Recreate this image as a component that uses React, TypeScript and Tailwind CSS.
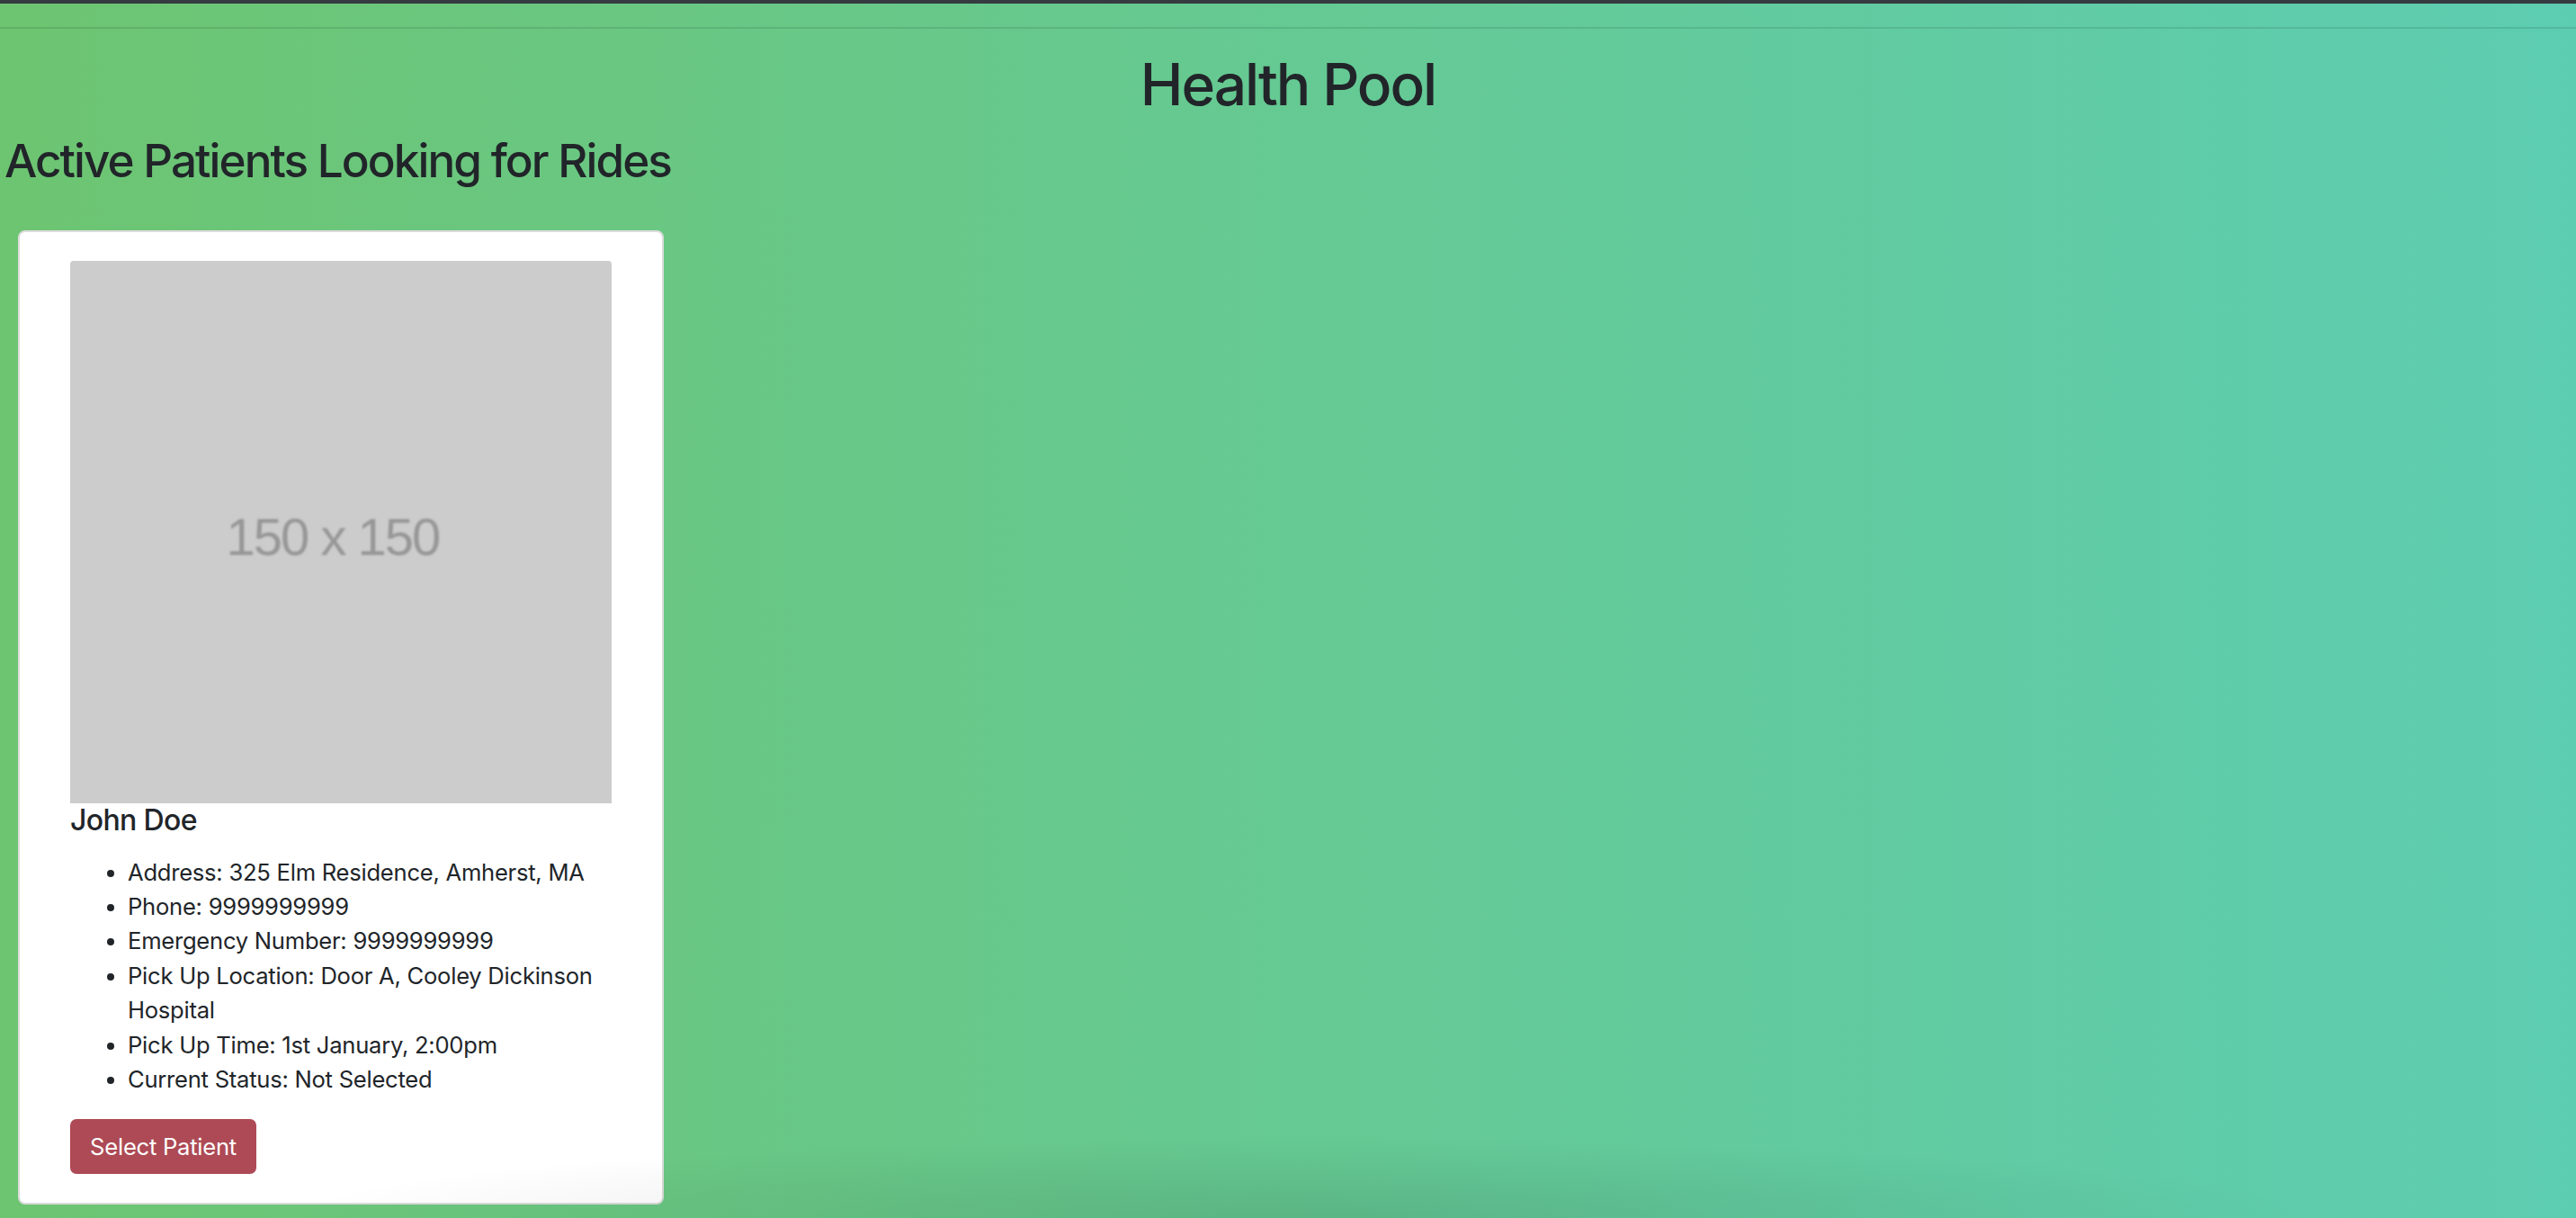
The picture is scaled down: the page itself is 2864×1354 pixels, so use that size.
import React from 'react';

type Patient = {
  name: string;
  details: string[];
};

const patient: Patient = {
  name: 'John Doe',
  details: [
    'Address: 325 Elm Residence, Amherst, MA',
    'Phone: 9999999999',
    'Emergency Number: 9999999999',
    'Pick Up Location: Door A, Cooley Dickinson Hospital',
    'Pick Up Time: 1st January, 2:00pm',
    'Current Status: Not Selected',
  ],
};

function PatientCard({ p }: { p: Patient }) {
  return (
    <div className="ml-[20px] w-[718px] rounded-[8px] border-2 border-[#dcdcdc] bg-white px-[56px] pt-[32px] pb-[32px]">
      {/* placeholder image */}
      <div className="flex h-[603px] w-[602px] items-center justify-center rounded-t-[4px] bg-[#cccccc]">
        <span className="mt-[10px] mr-[18px] font-['Liberation_Sans',sans-serif] text-[58px] tracking-[-2px] text-[#979797] blur-[0.8px]">
          150 x 150
        </span>
      </div>
      <h5 className="mb-[19px] text-[32px] font-medium leading-[38.4px] tracking-[-0.02em]">{p.name}</h5>
      <ul className="mb-[25px] list-disc pl-[64px] text-[25.6px] leading-[38.4px] tracking-[-0.01em]">
        {p.details.map((d, i) => (
          <li key={i}>{d}</li>
        ))}
      </ul>
      <button className="flex h-[61px] w-[207px] items-center justify-center rounded-[7px] bg-[#ad4a55] text-[25.6px] leading-[38.4px] tracking-[-0.01em] text-white">
        Select Patient
      </button>
    </div>
  );
}

export default function App() {
  return (
    <div className="relative h-screen w-full overflow-hidden bg-gradient-to-r from-[#6dc571] to-[#5dcdb1] font-['Inter',sans-serif] text-[#212529]">
      <div className="h-[4px] bg-[#353b40]" />
      <div className="h-[26px]" />
      <div className="h-[2px] bg-black/10" />

      <h1 className="mt-[24px] text-center text-[64px] font-medium leading-[1.2] tracking-[-0.032em]">Health Pool</h1>
      <h2 className="mt-[15px] ml-[5px] text-[51.2px] font-medium leading-[1.2] tracking-[-0.038em]">
        Active Patients Looking for Rides
      </h2>

      <div className="mt-[47px]">
        <PatientCard p={patient} />
      </div>

      {/* soft shadow along the bottom edge */}
      <div className="pointer-events-none absolute bottom-0 left-[300px] h-[90px] w-[2300px] bg-[radial-gradient(ellipse_at_bottom,rgba(0,0,0,0.1),transparent_70%)]" />
    </div>
  );
}
